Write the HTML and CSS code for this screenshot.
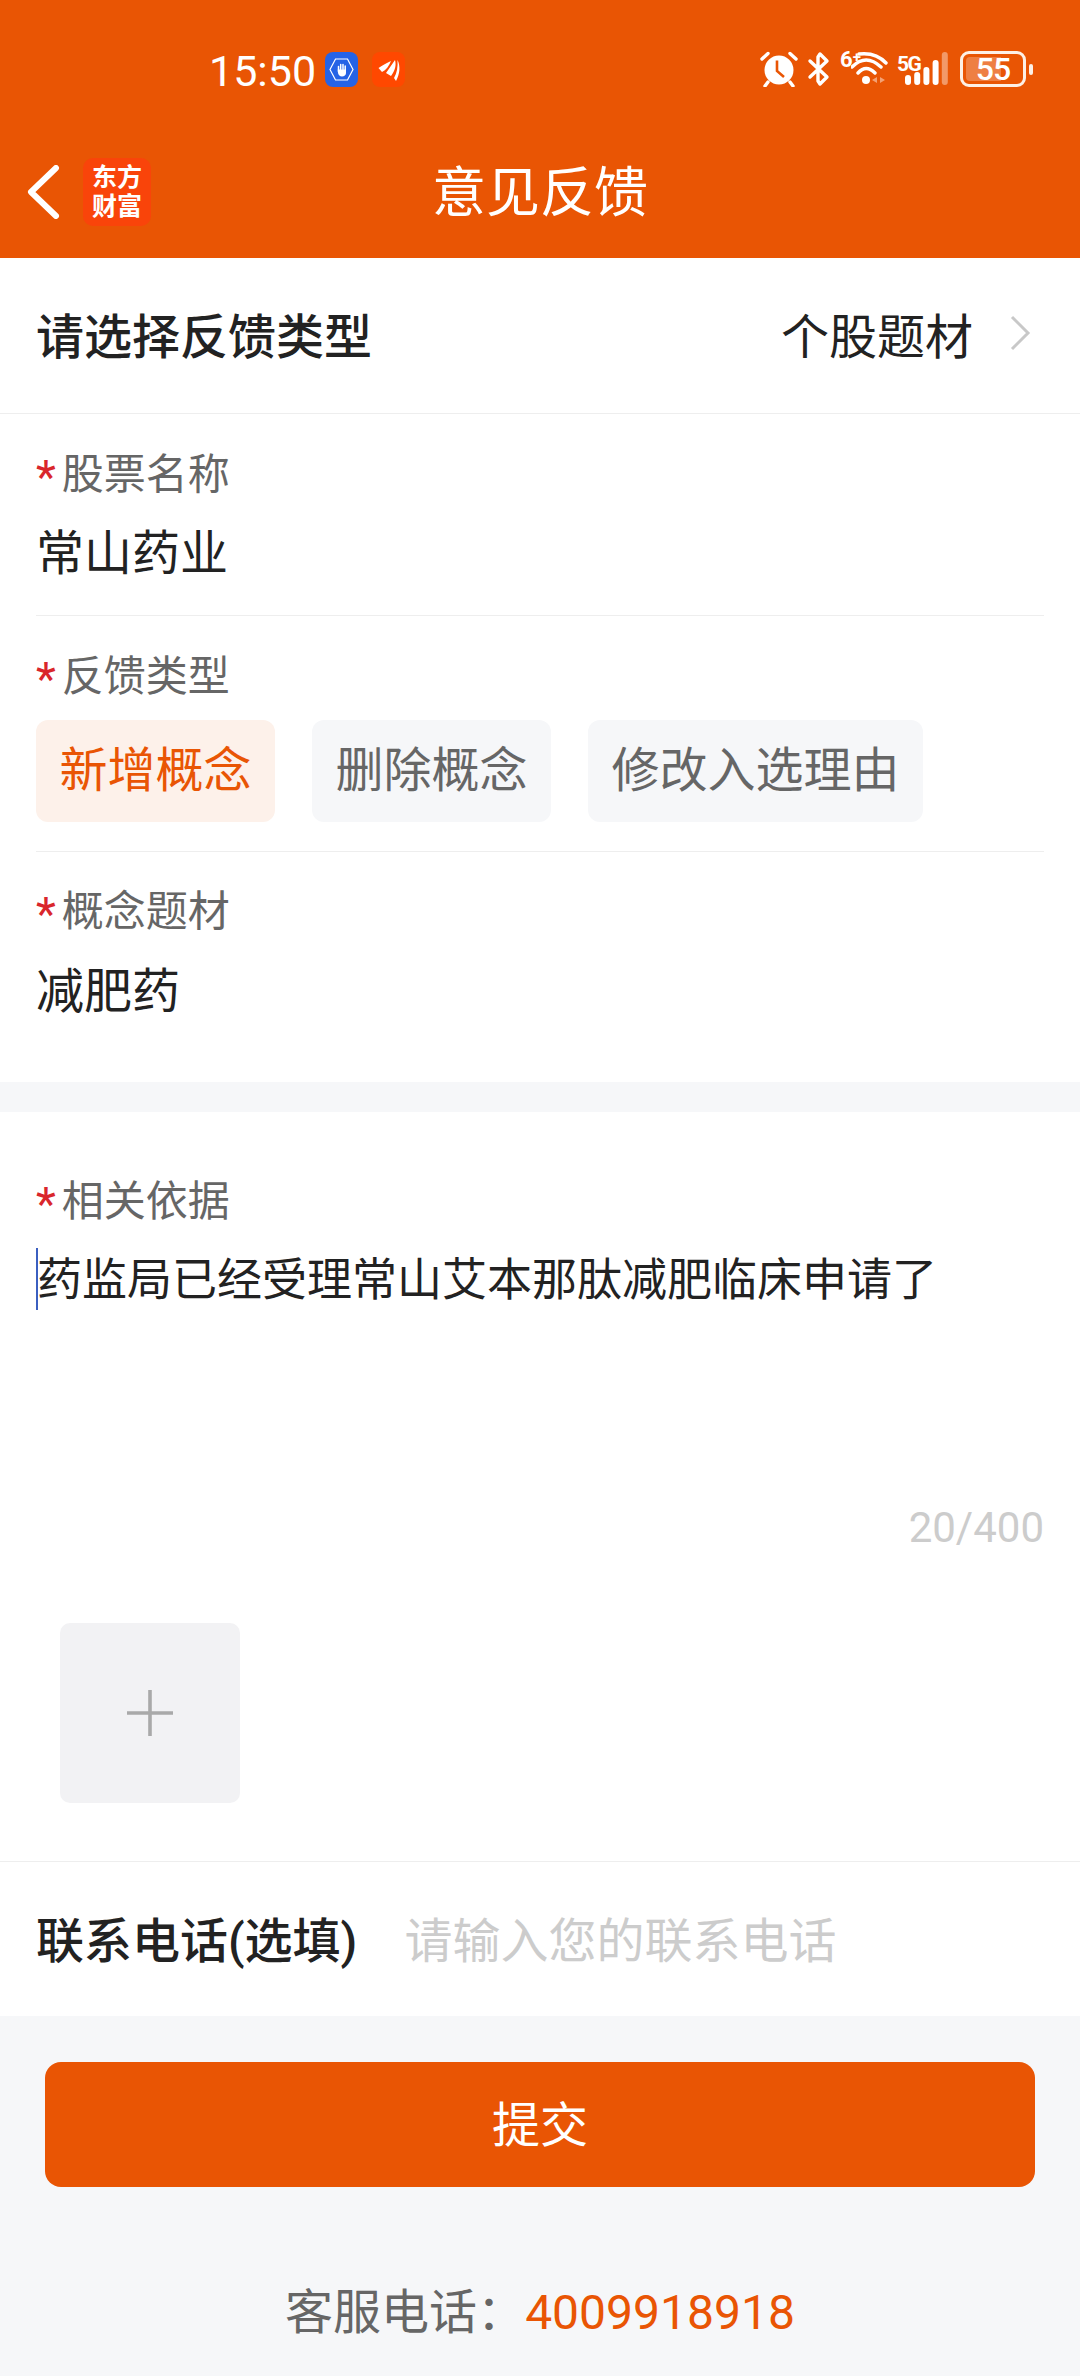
FILE: index.html
```html
<!DOCTYPE html>
<html lang="zh-CN">
<head>
  <meta charset="UTF-8" />
  <meta name="viewport" content="width=device-width, initial-scale=1.0"/>
  <title>意见反馈</title>
  <link rel="stylesheet" href="styles.css">
</head>
<body>
  <header class="header">
    <div class="statusbar">
      <div class="status-left">
        <span class="time">15:50</span>
        <svg class="app-icon" width="33" height="35" viewBox="0 0 33 35">
          <rect width="33" height="35" rx="8" fill="#2563e6"/>
          <path d="M10.500 7h12l5.500 10.500-5.500 10.500h-12l-5.500-10.500z" fill="none" stroke="#fff" stroke-width="1.200"/>
          <path d="M13.500 14.500v5M15.700 12.500v5M18 12.500v5M20.200 14v6" stroke="#fff" stroke-width="1.500" stroke-linecap="round"/>
          <path d="M12.800 17.500h8.200v3.500c0 2-1.800 3.500-4 3.500s-3.400-1.500-4-3.500z" fill="#fff"/>
        </svg>
        <svg class="app-icon app-icon-red" width="33" height="35" viewBox="0 0 33 35">
          <rect width="33" height="35" rx="8" fill="#ff4800"/>
          <path d="M6.500 16C10 14 14 11 19 9c-2 5-5 9-9 11z" fill="#fff"/>
          <path d="M14 21c3-4 6-9 9-13 1.500 5 0 11-4 16z" fill="#fff"/>
          <path d="M22 26c3-5 4-11 3.500-18 3 6 2.500 14-1.500 21z" fill="#fff"/>
        </svg>
      </div>
      <div class="status-right">
        <svg class="st-alarm" width="38" height="36" viewBox="0 0 38 36">
          <circle cx="19" cy="19" r="14.500" fill="#fff"/>
          <path d="M17 9.500V20l7 6" fill="none" stroke="#e95504" stroke-width="2.600"/>
          <path d="M2 8l6-5.500M36 8l-6-5.500M8 31l-3 4M30 31l3 4" stroke="#fff" stroke-width="3.400" stroke-linecap="round"/>
        </svg>
        <svg class="st-bt" width="24" height="36" viewBox="0 0 24 36">
          <path d="M3 10l17 16-7 7-2-3V6l2-3 7 7L3 26" fill="none" stroke="#fff" stroke-width="3.400" stroke-linejoin="round" stroke-linecap="round"/>
        </svg>
        <div class="st-wifi">
          <span class="st-tag">6<sup>+</sup></span>
          <svg width="38" height="36" viewBox="0 0 38 36">
            <path d="M8 3Q25 1 35 12M1 16Q15 2 30 16M7 22Q15 13 24 22" fill="none" stroke="#fff" stroke-width="3.400" stroke-linecap="round"/>
            <circle cx="15" cy="29" r="4" fill="#fff"/>
            <path d="M26 26v6l-5-3zM29 26v6l5-3z" fill="#fff" opacity=".45"/>
          </svg>
        </div>
        <div class="st-signal">
          <span class="st-tag st-5g">5G</span>
          <svg width="43" height="36" viewBox="0 0 43 36">
            <rect x="0" y="24" width="6" height="10" rx="3" fill="#fff"/>
            <rect x="9.200" y="21" width="6" height="13" rx="3" fill="#fff"/>
            <rect x="18.400" y="16" width="6" height="18" rx="3" fill="#fff"/>
            <rect x="27.600" y="9" width="6" height="25" rx="3" fill="#fff"/>
            <rect x="36.800" y="1" width="6" height="33" rx="3" fill="#fff" opacity=".4"/>
          </svg>
        </div>
        <div class="battery">
          <div class="battery-body">
            <span class="battery-fill"></span>
            <span class="battery-num">55</span>
          </div>
          <span class="battery-nub"></span>
        </div>
      </div>
    </div>
    <nav class="navbar">
      <div class="nav-left">
        <svg width="34" height="54" viewBox="0 0 34 54">
          <path d="M30 3L5 27l25 24" fill="none" stroke="#fff" stroke-width="6" stroke-linecap="round" stroke-linejoin="round"/>
        </svg>
        <div class="logo">东方<br>财富</div>
      </div>
      <h1 class="nav-title">意见反馈</h1>
    </nav>
  </header>

  <main>
    <section class="panel">
      <div class="type-row">
        <span class="strong-label">请选择反馈类型</span>
        <div class="type-value">
          <span>个股题材</span>
          <svg width="22" height="36" viewBox="0 0 22 36">
            <path d="M3 2l16 16L3 34" fill="none" stroke="#c8c8c8" stroke-width="3"/>
          </svg>
        </div>
      </div>

      <div class="field field-name">
        <div class="label"><i>*</i>股票名称</div>
        <div class="value">常山药业</div>
      </div>

      <div class="field field-kind">
        <div class="label"><i>*</i>反馈类型</div>
        <div class="chips">
          <span class="chip active">新增概念</span>
          <span class="chip">删除概念</span>
          <span class="chip">修改入选理由</span>
        </div>
      </div>

      <div class="field field-topic">
        <div class="label"><i>*</i>概念题材</div>
        <div class="value">减肥药</div>
      </div>
    </section>

    <section class="panel basis">
      <div class="label"><i>*</i>相关依据</div>
      <div class="basis-text"><span class="caret"></span>药监局已经受理常山艾本那肽减肥临床申请了</div>
      <div class="counter">20/400</div>
      <div class="upload">
        <svg width="48" height="48" viewBox="0 0 48 48">
          <path d="M24 1v46M1 24h46" stroke="#a9a9a9" stroke-width="3.600"/>
        </svg>
      </div>
    </section>

    <section class="contact">
      <span class="strong-label">联系电话(选填)</span>
      <span class="placeholder">请输入您的联系电话</span>
    </section>

    <button class="submit" type="button">提交</button>

    <footer class="service">客服电话：<span class="phone">4009918918</span></footer>
  </main>
</body>
</html>
```

FILE: styles.css
```css
* {
  box-sizing: border-box;
}

html, body {
  margin: 0;
  padding: 0;
}

body {
  width: 1080px;
  height: 2376px;
  overflow: hidden;
  background-color: #f6f7f9;
  color: #222;
  font-family: Roboto, "Noto Sans CJK SC", sans-serif;
  font-size: 48px;
}

.header {
  height: 258px;
  background-color: #e95504;
  color: #fff;
}

.statusbar {
  display: flex;
  justify-content: space-between;
  align-items: center;
  height: 138px;
  padding: 0 47px 0 209px;
}

.status-left {
  display: flex;
  align-items: center;
}

.time {
  width: 116px;
  padding-top: 3px;
  font-size: 43px;
  line-height: 50px;
}

.app-icon-red {
  margin-left: 14px;
}

.status-right {
  display: flex;
  align-items: center;
}

.st-bt {
  margin-left: 9px;
}

.st-wifi,
.st-signal {
  display: flex;
  align-items: flex-start;
  height: 36px;
}

.st-wifi {
  margin-left: 9px;
}

.st-signal {
  margin-left: 8px;
}

.st-tag {
  width: 10px;
  font-family: Roboto, sans-serif;
  font-size: 22px;
  font-weight: 700;
  line-height: 18px;
  white-space: nowrap;
}

.st-tag sup {
  font-size: 15px;
  line-height: 0;
  vertical-align: 5px;
}

.st-5g {
  width: 8px;
  margin-top: 4px;
  font-size: 21px;
  letter-spacing: -1.5px;
}

.st-wifi svg {
  margin-left: 1px;
}

.battery {
  display: flex;
  align-items: center;
  margin-left: 12px;
}

.battery-body {
  position: relative;
  display: flex;
  align-items: center;
  justify-content: center;
  width: 66px;
  height: 36px;
  border: 3px solid #fdf0e6;
  border-radius: 9px;
}

.battery-fill {
  position: absolute;
  left: 3px;
  top: 3px;
  bottom: 3px;
  width: 35px;
  border-radius: 4px 0 0 4px;
  background-color: rgba(255,255,255,0.25);
}

.battery-num {
  position: relative;
  color: #fff;
  font-size: 32px;
  font-weight: 500;
  letter-spacing: -1px;
  line-height: 30px;
}

.battery-nub {
  width: 4px;
  height: 11px;
  margin-left: 3px;
  border-radius: 2px;
  background-color: #fdf0e6;
}

.navbar {
  position: relative;
  display: flex;
  justify-content: center;
  align-items: center;
  height: 120px;
  padding-bottom: 8px;
}

.nav-left {
  position: absolute;
  left: 26px;
  top: 20px;
  display: flex;
  align-items: center;
}

.logo {
  width: 68px;
  height: 68px;
  margin-left: 23px;
  padding-top: 5px;
  border-radius: 10px;
  background-color: #f9440a;
  color: #fff;
  font-size: 25px;
  font-weight: 700;
  line-height: 29px;
  text-align: center;
}

.nav-title {
  margin: 0;
  font-size: 54px;
  font-weight: 400;
  line-height: 70px;
}

.panel {
  background-color: #fff;
}

.type-row {
  display: flex;
  justify-content: space-between;
  align-items: center;
  height: 156px;
  padding: 0 49px 5px 36px;
  border-bottom: 1px solid #eee;
}

.strong-label {
  color: #222;
  font-weight: 500;
}

.type-value {
  display: flex;
  align-items: center;
  gap: 36px;
}

.field {
  margin: 0 36px;
}

.label {
  height: 60px;
  color: #666;
  font-size: 42px;
  line-height: 63px;
}

.label i {
  margin-right: 6px;
  color: #d9262c;
  font-size: 46px;
  font-style: normal;
  line-height: 0;
  vertical-align: -4px;
}

.value {
  height: 66px;
  color: #222;
  line-height: 68px;
}

.field-name {
  height: 202px;
  padding-top: 29px;
  border-bottom: 1px solid #eee;
}

.field-name .value {
  margin-top: 17px;
}

.field-kind {
  height: 236px;
  padding-top: 29px;
  border-bottom: 1px solid #eee;
}

.chips {
  display: flex;
  gap: 37px;
  margin-top: 15px;
}

.chip {
  height: 102px;
  padding: 0 23.500px;
  border-radius: 12px;
  background-color: #f6f7f9;
  color: #666;
  line-height: 102px;
}

.chip.active {
  background-color: #fdf1ea;
  color: #e95504;
}

.field-topic {
  height: 230px;
  padding-top: 28px;
}

.field-topic .value {
  margin-top: 18px;
}

.basis {
  height: 750px;
  margin-top: 30px;
  padding: 58px 36px 0;
  border-bottom: 1px solid #eee;
}

.basis-text {
  margin-top: 18px;
  color: #222;
  font-size: 45px;
  line-height: 66px;
}

.caret {
  display: inline-block;
  width: 2px;
  height: 62px;
  margin-right: -1px;
  vertical-align: -14px;
  background-color: #3b5fc0;
}

.counter {
  margin-top: 184px;
  color: #ccc;
  font-size: 42px;
  line-height: 60px;
  text-align: right;
}

.upload {
  display: flex;
  justify-content: center;
  align-items: center;
  width: 180px;
  height: 180px;
  margin: 65px 0 0 24px;
  border-radius: 10px;
  background-color: #f2f2f4;
}

.contact {
  display: flex;
  align-items: center;
  gap: 47px;
  height: 154px;
  padding: 0 36px 5px;
  background-color: #fff;
}

.placeholder {
  color: #ccc;
}

.submit {
  display: block;
  width: 990px;
  height: 125px;
  margin: 46px 45px 0;
  padding-bottom: 8px;
  border: none;
  border-radius: 16px;
  background-color: #e95504;
  color: #fff;
  font-family: inherit;
  font-size: 48px;
}

.service {
  margin-top: 90px;
  color: #666;
  line-height: 72px;
  text-align: center;
}

.phone {
  color: #e95504;
}
```
